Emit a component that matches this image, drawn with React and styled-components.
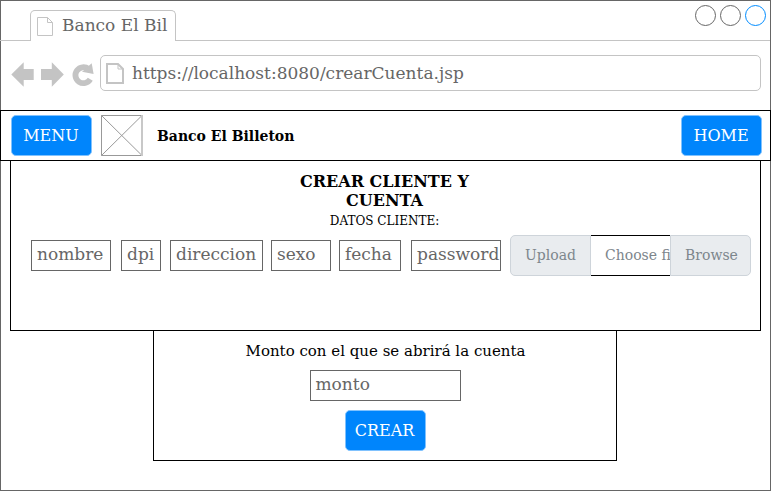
import React from "react";
import styled, { createGlobalStyle } from "styled-components";

const Global = createGlobalStyle`
  * { box-sizing: border-box; }
  body { margin: 0; background: #fff; font-family: "DejaVu Serif", serif; }
`;

const Window = styled.div`
  width: 771px;
  height: 491px;
  border: 1px solid #666;
  background: #fff;
`;
const TabStrip = styled.div`
  display: flex;
  justify-content: space-between;
  height: 40px;
  margin-left: -1px;
  padding-left: 30px;
  border-bottom: 1px solid #c4c4c4;
`;
const Tab = styled.div`
  display: flex;
  align-items: flex-start;
  width: 146px;
  height: 31px;
  margin-top: 9px;
  padding: 6px 0 0 6px;
  border: 1px solid #c4c4c4;
  border-bottom: none;
  border-radius: 5px 5px 0 0;
  background: #fff;
`;
const TabTitle = styled.span`
  margin-left: 9px;
  margin-top: -2px;
  font-size: 17px;
  line-height: 20px;
  white-space: nowrap;
  color: #666;
`;
const Controls = styled.div`
  display: flex;
  gap: 4px;
  padding: 4px 4px 0 0;
`;
const Control = styled.span`
  width: 21px;
  height: 21px;
  border: 1px solid ${(p) => p.$color};
  border-radius: 50%;
`;
const Toolbar = styled.div`
  display: flex;
  height: 69px;
  padding: 14px 9px 0 10px;
`;
const NavIcons = styled.svg`
  display: block;
  width: 89px;
  height: 36px;
`;
const Address = styled.div`
  display: flex;
  align-items: flex-start;
  width: 661px;
  height: 36px;
  padding: 7px 0 0 5px;
  border: 1px solid #c4c4c4;
  border-radius: 5px;
`;
const Url = styled.span`
  margin-left: 8px;
  font-size: 17px;
  line-height: 20px;
  color: #666;
`;
const Header = styled.header`
  display: flex;
  height: 51px;
  margin: 0 -1px;
  padding: 4px 8px 0 10px;
  border: 1px solid #000;
`;
const Button = styled.button`
  width: 81px;
  height: 41px;
  padding: 0 1px 0 0;
  border: 1px solid #80c2fe;
  border-radius: 5px;
  background: #0085fc;
  color: #fff;
  font: 16px/38px "DejaVu Serif", serif;
`;
const Logo = styled.svg`
  display: block;
  width: 42px;
  height: 41px;
  margin-left: 9px;
`;
const Brand = styled.strong`
  flex: 1;
  margin-left: 14px;
  font-size: 14px;
  line-height: 43px;
`;
const ClientPanel = styled.section`
  width: 751px;
  height: 171px;
  margin: -1px 0 0 9px;
  padding: 11px 0 0 20px;
  border: 1px solid #000;
`;
const Title = styled.h1`
  width: 201px;
  margin: 0 0 0 253px;
  font-size: 16px;
  line-height: 19px;
  text-align: center;
`;
const Subtitle = styled.p`
  width: 201px;
  margin: 4px 0 0 253px;
  font-size: 12px;
  line-height: 14px;
  text-align: center;
`;
const Fields = styled.div`
  display: flex;
  align-items: center;
  margin-top: 7px;
`;
const Field = styled.div`
  flex: none;
  width: ${(p) => p.$width}px;
  height: 31px;
  margin-right: ${(p) => p.$gap || 0}px;
  padding-left: 5px;
  border: 1px solid #666;
  font-size: 17px;
  line-height: 27px;
  white-space: nowrap;
  color: #666;
`;
const FilePicker = styled.div`
  display: flex;
  width: 241px;
  height: 41px;
  font-size: 14px;
  line-height: 39px;
  color: #7d868c;
`;
const FileAddon = styled.span`
  width: 81px;
  padding-left: 14px;
  border: 1px solid #ced4da;
  border-radius: ${(p) => (p.$end ? "0 5px 5px 0" : "5px 0 0 5px")};
  background: #e9ecef;
`;
const FileName = styled.span`
  width: 79px;
  padding-left: 14px;
  border: solid #000;
  border-width: 1px 0;
  overflow: hidden;
  white-space: nowrap;
`;
const AmountPanel = styled.section`
  display: flex;
  flex-direction: column;
  align-items: center;
  width: 464px;
  height: 131px;
  margin: -1px 0 0 152px;
  border: 1px solid #000;
`;
const AmountLabel = styled.p`
  margin: 10px 0 9px;
  padding-left: 1px;
  font-size: 15px;
  line-height: 20px;
`;
const AmountField = styled(Field)`
  margin-bottom: 9px;
`;

function PageIcon({ w, h, stroke }) {
  const i = stroke / 2;
  const f = 5;
  return (
    <svg width={w} height={h} fill="none" stroke="#c4c4c4">
      <path
        strokeWidth={stroke}
        d={`M${i} ${i}H${w - f - i}L${w - i} ${f + i}V${h - i}H${i}Z`}
      />
      <path d={`M${w - f - i} ${i}V${f + i}H${w - i}`} />
    </svg>
  );
}

const fields = [
  ["nombre", 80, 10],
  ["dpi", 40, 9],
  ["direccion", 93, 8],
  ["sexo", 60, 8],
  ["fecha", 62, 10],
  ["password", 90, 9],
];

export default function App() {
  return (
    <>
      <Global />
      <Window>
        <TabStrip>
          <Tab>
            <PageIcon w={16} h={19} stroke={1} />
            <TabTitle>Banco El Bil</TabTitle>
          </Tab>
          <Controls>
            <Control $color="#666" />
            <Control $color="#666" />
            <Control $color="#008cff" />
          </Controls>
        </TabStrip>
        <Toolbar>
          <NavIcons viewBox="11 55 89 36">
            <path
              fill="#c4c4c4"
              d="M11.3 74.5L23.7 62.3V69H33.7V80H23.7V86.7ZM63.8 74.5L51.8 62.3V69H41V80H51.8V86.7Z"
            />
            <path
              d="M88.5 69A8 8 0 1 0 90.3 79.3"
              fill="none"
              stroke="#c4c4c4"
              strokeWidth="5.8"
            />
            <path fill="#c4c4c4" d="M91.7 63.3L93.6 73.9L82 71.8Z" />
          </NavIcons>
          <Address>
            <PageIcon w={18} h={21} stroke={2} />
            <Url>https://localhost:8080/crearCuenta.jsp</Url>
          </Address>
        </Toolbar>
        <Header>
          <Button>MENU</Button>
          <Logo fill="none" stroke="#999">
            <path d="M41.5 .5H.5V40.5H41.5M.5 .5L41 40.5M41 .5L.5 40.5" />
            <path stroke="#c8c8c8" strokeWidth="2" d="M41 0V41" />
          </Logo>
          <Brand>Banco El Billeton</Brand>
          <Button>HOME</Button>
        </Header>
        <ClientPanel>
          <Title>CREAR CLIENTE Y CUENTA</Title>
          <Subtitle>DATOS CLIENTE:</Subtitle>
          <Fields>
            {fields.map(([name, width, gap]) => (
              <Field key={name} $width={width} $gap={gap}>
                {name}
              </Field>
            ))}
            <FilePicker>
              <FileAddon>Upload</FileAddon>
              <FileName>Choose file</FileName>
              <FileAddon $end>Browse</FileAddon>
            </FilePicker>
          </Fields>
        </ClientPanel>
        <AmountPanel>
          <AmountLabel>Monto con el que se abrirá la cuenta</AmountLabel>
          <AmountField $width={151}>monto</AmountField>
          <Button>CREAR</Button>
        </AmountPanel>
      </Window>
    </>
  );
}
